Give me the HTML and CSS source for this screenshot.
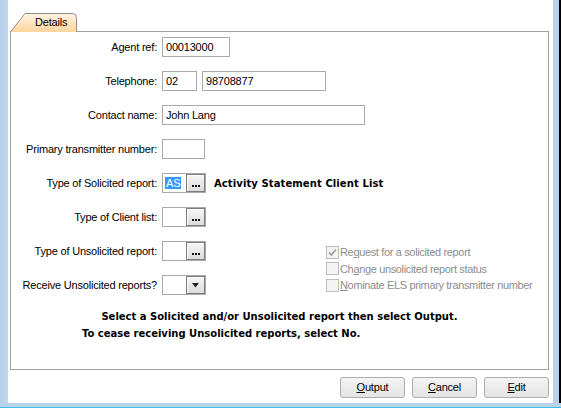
FILE: index.html
```html
<!DOCTYPE html>
<html>
<head>
<meta charset="utf-8">
<link rel="stylesheet" href="styles.css">
</head>
<body>
<div class="frame">
  <div class="edge-left"></div>
  <div class="main">
    <div class="tabs">
      <div class="tab">
        <svg class="tab-bg" width="67" height="19" viewBox="0 0 67 19">
          <defs>
            <linearGradient id="tg" x1="0" y1="0" x2="0" y2="1">
              <stop offset="0" stop-color="#fff4e4"/>
              <stop offset="1" stop-color="#ffd49c"/>
            </linearGradient>
          </defs>
          <path d="M0.5,19 L15,0.5 L62.5,0.5 Q66.5,0.5 66.5,4.5 L66.5,19 Z" fill="url(#tg)" stroke="none"/>
          <path d="M0.5,19 L15,0.5 L62.5,0.5 Q66.5,0.5 66.5,4.5 L66.5,19" fill="none" stroke="#8e8e8e"/>
        </svg>
        <span class="tab-label">Details</span>
      </div>
    </div>
    <div class="panel">
      <div class="form">
        <div class="label">Agent ref:</div>
        <div class="ctrls"><span class="field w-agent">00013000</span></div>

        <div class="label">Telephone:</div>
        <div class="ctrls"><span class="field w-area">02</span><span class="field w-phone">98708877</span></div>

        <div class="label">Contact name:</div>
        <div class="ctrls"><span class="field w-contact">John Lang</span></div>

        <div class="label">Primary transmitter number:</div>
        <div class="ctrls"><span class="field w-primary"></span></div>

        <div class="label">Type of Solicited report:</div>
        <div class="ctrls">
          <span class="picker"><span class="picker-text"><span class="sel">AS</span></span><span class="picker-btn"><svg width="8" height="2" viewBox="0 0 8 2"><rect x="0" y="0" width="2" height="2" fill="#111"/><rect x="3" y="0" width="2" height="2" fill="#111"/><rect x="6" y="0" width="2" height="2" fill="#111"/></svg></span></span>
          <span class="desc">Activity Statement Client List</span>
        </div>

        <div class="label">Type of Client list:</div>
        <div class="ctrls">
          <span class="picker"><span class="picker-text"></span><span class="picker-btn"><svg width="8" height="2" viewBox="0 0 8 2"><rect x="0" y="0" width="2" height="2" fill="#111"/><rect x="3" y="0" width="2" height="2" fill="#111"/><rect x="6" y="0" width="2" height="2" fill="#111"/></svg></span></span>
        </div>

        <div class="label r7">Type of Unsolicited report:</div>
        <div class="ctrls r7">
          <span class="picker"><span class="picker-text"></span><span class="picker-btn"><svg width="8" height="2" viewBox="0 0 8 2"><rect x="0" y="0" width="2" height="2" fill="#111"/><rect x="3" y="0" width="2" height="2" fill="#111"/><rect x="6" y="0" width="2" height="2" fill="#111"/></svg></span></span>
        </div>

        <div class="label r8">Receive Unsolicited reports?</div>
        <div class="ctrls r8">
          <span class="picker"><span class="picker-text"></span><span class="picker-btn drop"><svg width="7" height="5" viewBox="0 0 7 5"><path d="M0,0 L7,0 L3.5,4.5 Z" fill="#222"/></svg></span></span>
        </div>

        <div class="checks">
          <div class="cb"><span class="box"><svg width="11" height="11" viewBox="0 0 11 11"><path d="M2,5.5 L4.3,8 L9,2.5" fill="none" stroke="#9a9a9a" stroke-width="1.6"/></svg></span><span>Re<u>q</u>uest for a solicited report</span></div>
          <div class="cb"><span class="box"></span><span>Ch<u>a</u>nge unsolicited report status</span></div>
          <div class="cb"><span class="box"></span><span><u>N</u>ominate ELS primary transmitter number</span></div>
        </div>
      </div>
      <p class="msg msg1">Select a Solicited and/or Unsolicited report then select Output.</p>
      <p class="msg msg2">To cease receiving Unsolicited reports, select No.</p>
    </div>
    <div class="buttons">
      <button class="btn"><u>O</u>utput</button>
      <button class="btn"><u>C</u>ancel</button>
      <button class="btn"><u>E</u>dit</button>
    </div>
  </div>
  <div class="edge-right"></div>
</div>
<div class="edge-bottom"></div>
</body>
</html>
```
FILE: styles.css
```css
* { box-sizing: border-box; }
html, body { margin: 0; padding: 0; }
body {
  width: 561px;
  height: 408px;
  overflow: hidden;
  background: #fff;
  font-family: "Liberation Sans", Arial, sans-serif;
  font-size: 11px;
  letter-spacing: -0.2px;
  color: #000;
  display: flex;
  flex-direction: column;
}
.frame { display: flex; height: 403px; }
.edge-left { width: 8px; background: linear-gradient(90deg, #b5cde8, #c3d7ee); }
.edge-right { width: 8px; background: #b9d1ea; border-right: 2px solid #000; }
.edge-bottom { height: 5px; background: #b9d1ea; border-bottom: 1px solid #3cbfe0; }
.main {
  flex: 1;
  display: flex;
  flex-direction: column;
  padding: 13px 4px 5px 2px;
  background: #fff;
}
.tabs { display: flex; height: 19px; margin-bottom: -1px; position: relative; z-index: 1; }
.tab { position: relative; width: 67px; height: 19px; }
.tab-bg { position: absolute; left: 0; top: 0; }
.tab-label { position: relative; display: block; padding-left: 25px; line-height: 19px; }
.panel {
  flex: 1;
  border: 1px solid #a0a0a0;
  padding: 5px 0 0 0;
  display: flex;
  flex-direction: column;
}
.form {
  display: grid;
  grid-template-columns: 146px 1fr;
  column-gap: 5px;
  row-gap: 14px;
  grid-auto-rows: 20px;
}
.label { grid-column: 1; text-align: right; line-height: 20px; white-space: nowrap; }
.ctrls { grid-column: 2; display: flex; align-items: center; gap: 5px; height: 20px; }
.r7 { grid-row: 7; }
.r8 { grid-row: 8; }
.field {
  display: block;
  height: 20px;
  border: 1px solid #a9a9a9;
  padding: 0 3px;
  line-height: 18px;
  background: #fff;
  white-space: nowrap;
}
.w-agent { width: 68px; }
.w-area { width: 35px; }
.w-phone { width: 124px; }
.w-contact { width: 203px; }
.w-primary { width: 43px; }
.picker {
  display: flex;
  width: 44px;
  height: 20px;
  border: 1px solid #a9a9a9;
  background: #fff;
}
.picker-text { flex: 1; padding-left: 2px; line-height: 18px; }
.sel { background: #3399ff; color: #fff; padding: 0 1px; }
.picker-btn {
  width: 19px;
  height: 18px;
  border: 1px solid #7c7c7c;
  background: linear-gradient(#f6f6f6, #dcdcdc);
  box-shadow: inset 1px 1px 0 #fff;
  display: flex;
  align-items: flex-end;
  justify-content: center;
  padding-bottom: 4px;
}
.picker-btn.drop { align-items: center; padding-bottom: 0; }
.picker-btn svg { display: block; }
.desc {
  margin-left: 3px;
  font-family: "DejaVu Sans", Verdana, sans-serif;
  font-weight: bold;
  font-size: 10px;
  letter-spacing: 0.1px;
  white-space: nowrap;
}
.checks {
  grid-column: 2;
  grid-row: 7 / span 2;
  align-self: start;
  margin-left: 164px;
  margin-top: 3px;
  color: #8d8d8d;
  letter-spacing: -0.35px;
}
.cb { display: flex; align-items: center; gap: 1px; height: 16.5px; white-space: nowrap; }
.box {
  width: 13px;
  height: 13px;
  border: 1px solid #bcbcbc;
  background: #f4f4f4;
  display: flex;
  align-items: center;
  justify-content: center;
}
.box svg { display: block; }
.msg {
  margin: 0;
  font-family: "DejaVu Sans", Verdana, sans-serif;
  font-weight: bold;
  font-size: 10px;
  letter-spacing: 0;
  line-height: 14px;
  white-space: nowrap;
}
.msg1 { margin-top: 15px; text-align: center; }
.msg2 { margin-top: 3px; padding-left: 71px; }
.buttons { display: flex; justify-content: flex-end; gap: 7px; margin-top: 7px; }
.btn {
  width: 65px;
  height: 21px;
  margin: 0;
  padding: 0;
  border: 1px solid #adadad;
  border-radius: 3px;
  background: linear-gradient(#f4f4f4, #e4e4e4);
  font-family: "Liberation Sans", Arial, sans-serif;
  font-size: 11px;
  letter-spacing: -0.2px;
  color: #000;
  line-height: 19px;
  text-align: center;
}
```
